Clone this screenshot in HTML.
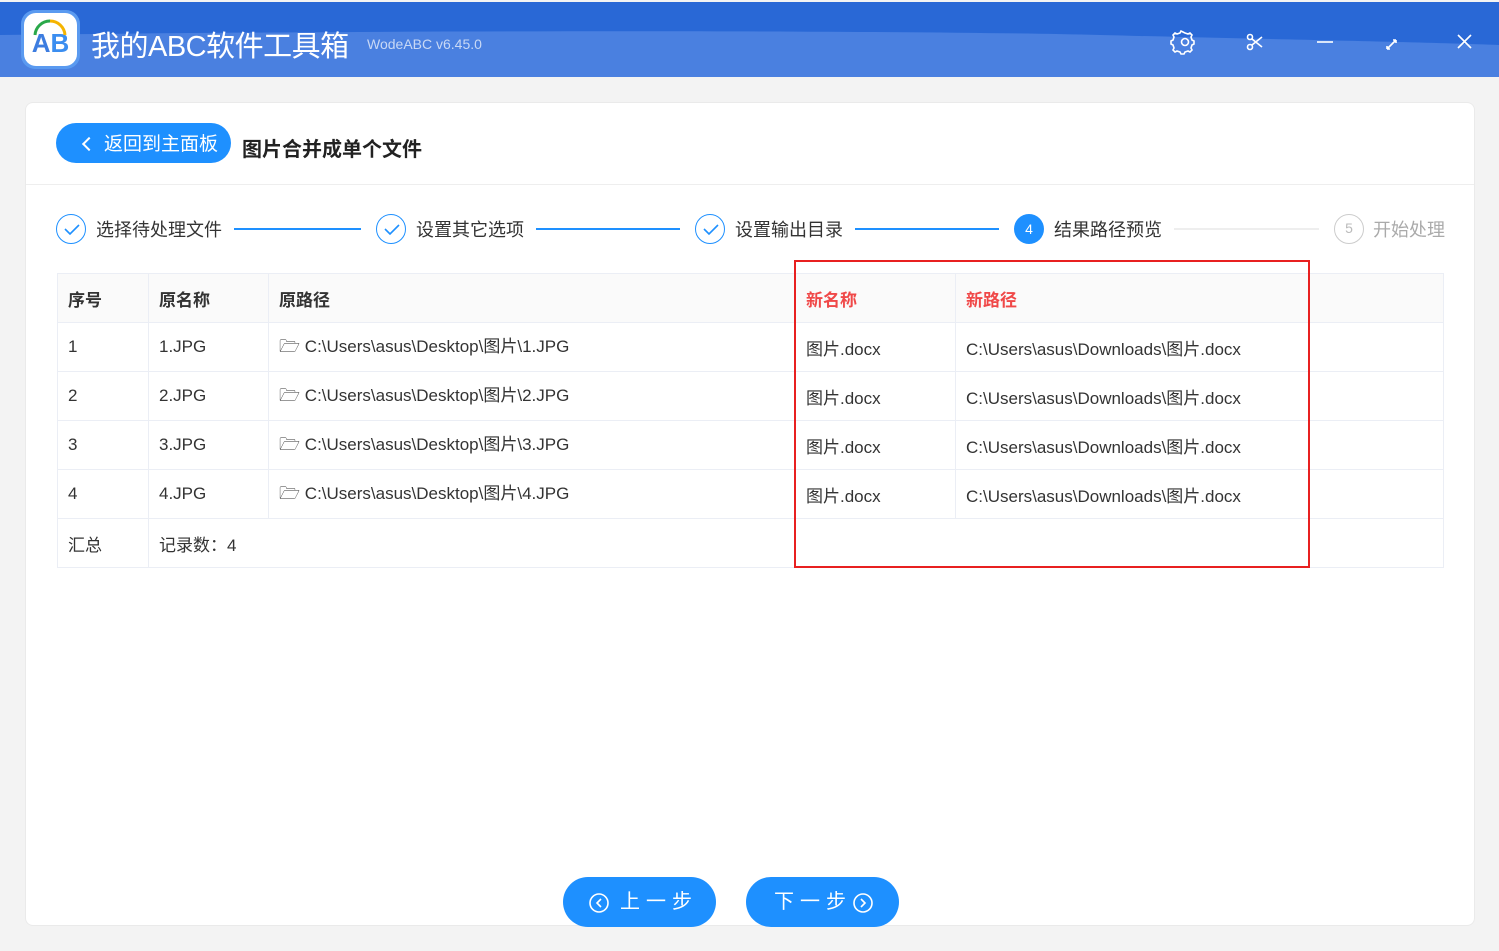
<!DOCTYPE html><html><head><meta charset="utf-8"><style>
*{margin:0;padding:0;box-sizing:border-box}
body{width:1499px;height:951px;background:#f3f3f3;font-family:"Liberation Sans","Noto Sans CJK SC",sans-serif;position:relative;overflow:hidden;color:#333}
.abs{position:absolute}
.top{left:0;top:2px;width:1499px;height:75px;background:#2968d6;overflow:hidden}
.card{left:25px;top:102px;width:1450px;height:824px;background:#fff;border:1px solid #eaeaea;border-radius:8px}
.step{font-size:18px;color:#333;top:216px}
.circ{width:30px;height:30px;border-radius:50%;border:1.5px solid #1e90ff;top:214px}
.line{height:2px;background:#1e90ff;top:228px}
table{border-collapse:collapse;font-size:17px}
td{height:49px;border-bottom:1px solid #ebeef5;border-right:1px solid #ebeef5;padding-left:10px;color:#333}
th{height:49px;text-align:left;padding-left:10px;background:#fafafa;border-bottom:1px solid #ebeef5;border-right:1px solid #ebeef5;font-weight:bold}
.btn{top:877px;width:153px;height:50px;border-radius:25px;background:#1e90ff;color:#fff;font-size:20px;line-height:50px;letter-spacing:6px}
</style></head><body>
<div class="abs top">
<svg class="abs" style="left:0;top:0" width="1499" height="75"><path d="M0 33 C400 28 900 28 1100 33 C1300 38 1420 40 1499 43 L1499 75 L0 75Z" fill="#4a80e0"/></svg>
<div class="abs" style="left:21px;top:8px;width:59px;height:59px;border-radius:14px;background:#5a9af0"></div>
<div class="abs" style="left:24px;top:11px;width:53px;height:53px;border-radius:12px;background:#fff;font-weight:bold;font-size:26px;line-height:60px;text-align:center;color:#3d7de0">A<span style="color:#3b8ef0">B</span></div>
<svg class="abs" style="left:30px;top:15px" width="40" height="20"><path d="M5 18 A15 15 0 0 1 20 4" stroke="#2aa84a" stroke-width="3" fill="none"/><path d="M20 4 A15 15 0 0 1 35 18" stroke="#f5b400" stroke-width="3" fill="none"/></svg>
<div class="abs" style="left:91px;top:21px;font-size:29px;color:#fff;letter-spacing:-0.5px">我的ABC软件工具箱</div>
<div class="abs" style="left:367px;top:34px;font-size:14px;color:#c8d8f5">WodeABC v6.45.0</div>
<svg class="abs" style="left:1170px;top:28px" width="310" height="26" fill="none" stroke="#fff" stroke-width="1.6">
<circle cx="15" cy="12" r="3.5"/><path d="M15 3l3 1 2-1 2 2-1 2 1 3 2 1v3l-2 1-1 3 1 2-2 2-2-1-3 1-1 2h-3l-1-2-3-1-2 1-2-2 1-2-1-3-2-1v-3l2-1 1-3-1-2 2-2 2 1 3-1 1-2z"/>
<circle cx="80" cy="7" r="2.5"/><circle cx="80" cy="17" r="2.5"/><path d="M82 9l10 8M82 15l10-8"/>
<path d="M147 12h16"/>
<path d="M217 19l9-9M226 10h-3M226 10v3M217 19h3M217 19v-3"/>
<path d="M288 5l13 13M301 5l-13 13"/></svg>
</div>
<div class="abs card"></div>
<div class="abs" style="left:56px;top:123px;width:175px;height:40px;border-radius:20px;background:#1e90ff;color:#fff;font-size:19px;line-height:43px;padding-left:48px">返回到主面板</div>
<div class="abs" style="top:139px;left:84px;width:10px;height:10px;border-left:2px solid #fff;border-bottom:2px solid #fff;transform:rotate(45deg)"></div>
<div class="abs" style="left:242px;top:133px;font-size:20px;font-weight:bold;color:#222">图片合并成单个文件</div>
<div class="abs" style="left:26px;top:184px;width:1448px;height:1px;background:#eee"></div>
<div class="abs circ" style="left:56px"></div><div class="abs circ" style="left:376px"></div><div class="abs circ" style="left:695px"></div>
<svg class="abs" style="left:56px;top:214px" width="700" height="30" fill="none" stroke="#1e90ff" stroke-width="1.6"><path d="M9 15l5 5 9-9M329 15l5 5 9-9M648 15l5 5 9-9"/></svg>
<div class="abs" style="left:1014px;top:214px;width:30px;height:30px;border-radius:50%;background:#1e90ff;color:#fff;text-align:center;line-height:30px;font-size:14px">4</div>
<div class="abs" style="left:1334px;top:214px;width:30px;height:30px;border-radius:50%;border:1.5px solid #ccc;color:#bbb;text-align:center;line-height:27px;font-size:14px">5</div>
<div class="abs step" style="left:96px">选择待处理文件</div>
<div class="abs step" style="left:416px">设置其它选项</div>
<div class="abs step" style="left:735px">设置输出目录</div>
<div class="abs step" style="left:1054px">结果路径预览</div>
<div class="abs step" style="left:1373px;color:#aaa">开始处理</div>
<div class="abs line" style="left:234px;width:127px"></div>
<div class="abs line" style="left:536px;width:144px"></div>
<div class="abs line" style="left:855px;width:144px"></div>
<div class="abs line" style="left:1174px;width:145px;background:#eee"></div>
<table class="abs" style="left:57px;top:273px;width:1387px;border:1px solid #ebeef5">
<tr><th style="width:91px">序号</th><th style="width:120px">原名称</th><th style="width:527px">原路径</th><th style="width:160px;color:#f04848">新名称</th><th style="width:353px;color:#f04848">新路径</th><th></th></tr>
<tr><td>1</td><td>1.JPG</td><td>🗁 C:\Users\asus\Desktop\图片\1.JPG</td><td>图片.docx</td><td>C:\Users\asus\Downloads\图片.docx</td><td></td></tr>
<tr><td>2</td><td>2.JPG</td><td>🗁 C:\Users\asus\Desktop\图片\2.JPG</td><td>图片.docx</td><td>C:\Users\asus\Downloads\图片.docx</td><td></td></tr>
<tr><td>3</td><td>3.JPG</td><td>🗁 C:\Users\asus\Desktop\图片\3.JPG</td><td>图片.docx</td><td>C:\Users\asus\Downloads\图片.docx</td><td></td></tr>
<tr><td>4</td><td>4.JPG</td><td>🗁 C:\Users\asus\Desktop\图片\4.JPG</td><td>图片.docx</td><td>C:\Users\asus\Downloads\图片.docx</td><td></td></tr>
<tr><td>汇总</td><td colspan="5" style="border-right:none">记录数：4</td></tr>
</table>
<div class="abs" style="left:794px;top:260px;width:516px;height:308px;border:2px solid #e82020"></div>
<div class="abs btn" style="left:563px;padding-left:57px">上一步</div>
<div class="abs btn" style="left:746px;padding-left:28px">下一步</div>
<svg class="abs" style="left:588px;top:892px" width="300" height="22" fill="none" stroke="#fff" stroke-width="1.6"><circle cx="11" cy="11" r="9"/><path d="M13 7l-4 4 4 4"/><circle cx="275" cy="11" r="9"/><path d="M273 7l4 4-4 4"/></svg>
</body></html>
